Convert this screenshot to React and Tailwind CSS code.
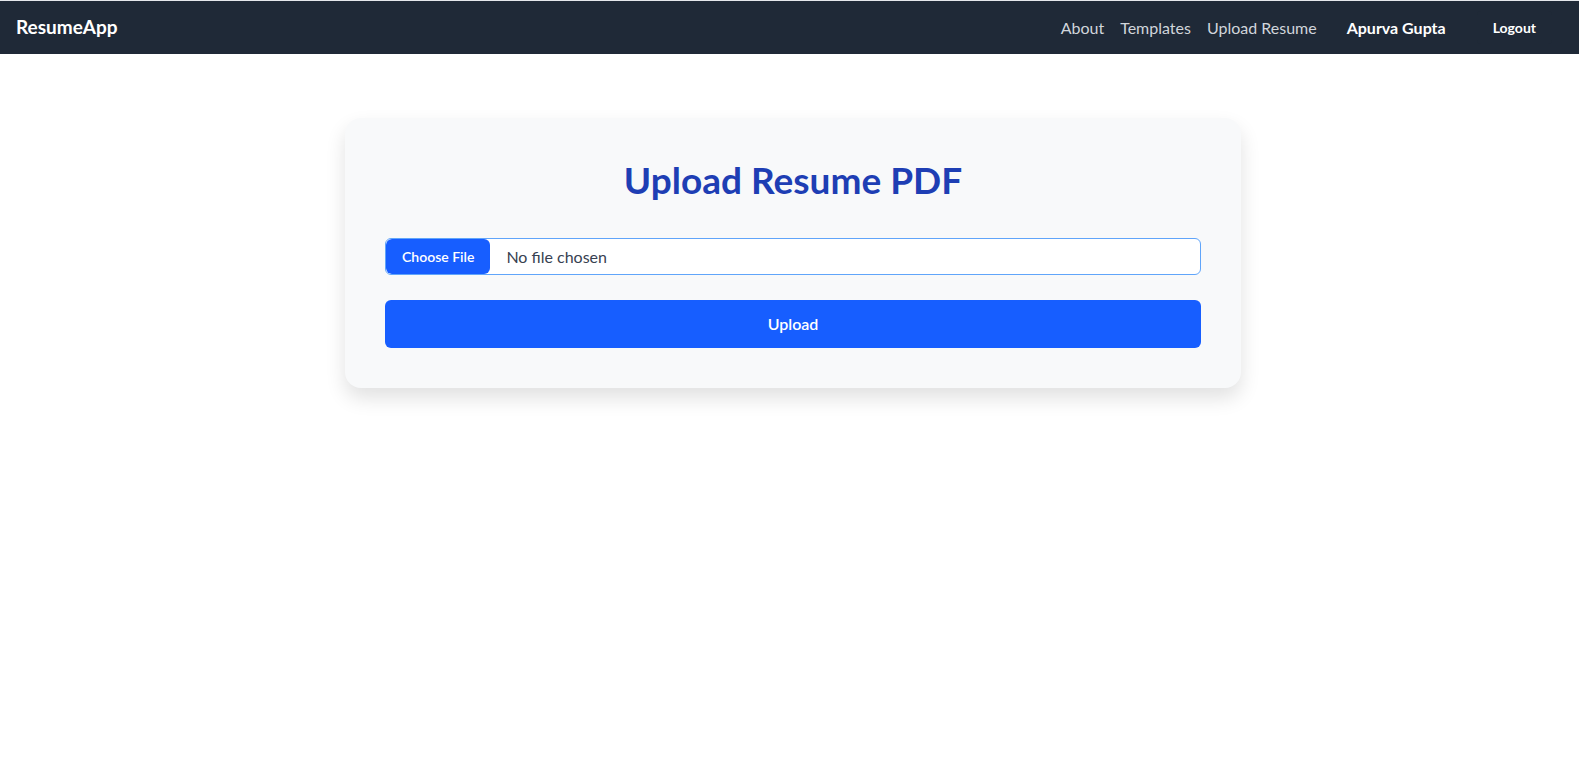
import React from 'react'

const Navbar = () => {
  return (
    <nav className="h-[54px] bg-[#1f2937] border-t border-[#e5e7eb] flex items-center justify-between pl-4 pr-[27px]">
      <a href="/" className="text-white font-bold text-[19px]">ResumeApp</a>
      <div className="flex items-center">
        <a href="/about" className="text-[#d1d5db] text-[16px]">About</a>
        <a href="/templates" className="text-[#d1d5db] text-[16px] ml-4">Templates</a>
        <a href="/upload" className="text-[#d1d5db] text-[16px] ml-4">Upload Resume</a>
        <span className="text-white font-bold text-[16px] ml-[30px]">Apurva Gupta</span>
        <button className="ml-[31px] bg-[#1f2937] text-white font-bold text-[14px] px-4 py-1.5 rounded">
          Logout
        </button>
      </div>
    </nav>
  )
}

const UploadCard = () => {
  return (
    <div className="w-[896px] bg-[#f8f9fa] rounded-2xl shadow-[0_10px_20px_rgba(0,0,0,0.12)] px-10 pt-[42px] pb-10">
      <h1 className="text-center text-[37px] leading-10 font-bold text-[#1e3eb4]">Upload Resume PDF</h1>
      <div className="mt-[38px] h-[37px] flex items-center bg-white border border-[#60a5fa] rounded-md overflow-hidden">
        <span className="h-full flex items-center px-4 bg-[#175eff] text-white text-[14px] font-semibold rounded-md">
          Choose File
        </span>
        <span className="ml-4 text-[16px] text-[#374151]">No file chosen</span>
      </div>
      <button className="mt-[25px] w-full h-12 bg-[#175eff] text-white font-semibold text-[16px] rounded-md">
        Upload
      </button>
    </div>
  )
}

export default function App() {
  return (
    <div className="min-h-[770px] bg-white font-['Lato','Noto_Sans',sans-serif]">
      <Navbar />
      <div className="flex justify-center pl-[7px] mt-[64px]">
        <UploadCard />
      </div>
    </div>
  )
}
